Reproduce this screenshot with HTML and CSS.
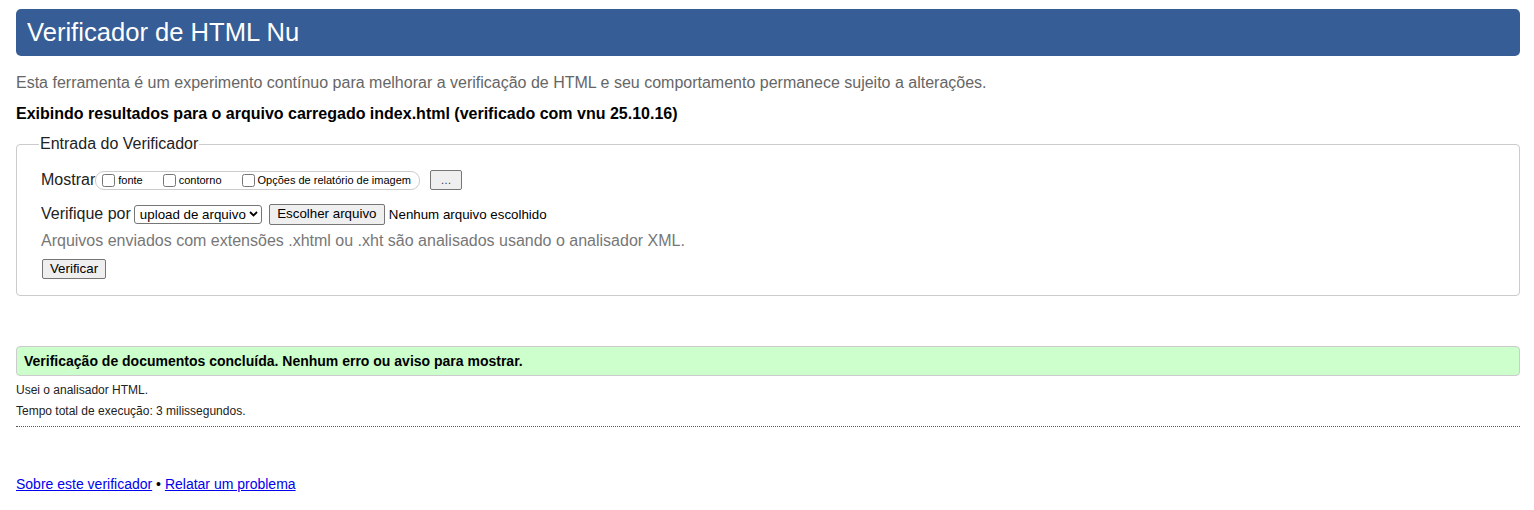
FILE: index.html
```html
<!DOCTYPE html>
<html lang="pt-BR">
<head>
<meta charset="utf-8">
<title>Verificador de HTML Nu</title>
<link rel="stylesheet" href="styles.css">
</head>
<body>
<h1 class="title">Verificador de HTML Nu</h1>
<p class="intro">Esta ferramenta é um experimento contínuo para melhorar a verificação de HTML e seu comportamento permanece sujeito a alterações.</p>
<p class="showing">Exibindo resultados para o arquivo carregado index.html (verificado com vnu 25.10.16)</p>
<fieldset class="input-box">
  <legend class="input-legend">Entrada do Verificador</legend>
  <div class="row">
    <span class="row-label">Mostrar</span><span class="options"><label class="opt"><input type="checkbox" class="cb">fonte</label><label class="opt"><input type="checkbox" class="cb">contorno</label><label class="opt last"><input type="checkbox" class="cb">Opções de relatório de imagem</label></span>
    <button class="btn dots" type="button">…</button>
  </div>
  <div class="row row2">
    <span class="row-label">Verifique por</span>
    <span class="sel" role="combobox"><span class="sel-text">upload de arquivo</span><svg class="chev" width="9" height="6" viewBox="0 0 9 6"><path d="M1 1 L4.5 4.5 L8 1" fill="none" stroke="#000" stroke-width="1.8"/></svg></span>
    <button class="btn choose" type="button">Escolher arquivo</button>
    <span class="nofile">Nenhum arquivo escolhido</span>
  </div>
  <p class="hint">Arquivos enviados com extensões .xhtml ou .xht são analisados usando o analisador XML.</p>
  <button class="btn submit" type="button">Verificar</button>
</fieldset>
<p class="success">Verificação de documentos concluída. Nenhum erro ou aviso para mostrar.</p>
<div class="details">
  <p class="detail">Usei o analisador HTML.</p>
  <p class="detail second">Tempo total de execução: 3 milissegundos.</p>
</div>
<p class="footer"><a href="#" class="flink">Sobre este verificador</a> • <a href="#" class="flink">Relatar um problema</a></p>
</body>
</html>
```

FILE: styles.css
```css
html, body {
  background: #fff;
}
body {
  margin: 0;
  padding: 0 14px 0 16px;
  font-family: "Liberation Sans", Arial, sans-serif;
  color: #000;
}
.title {
  margin: 9px 0 0;
  padding: 9px 11px;
  height: 29px;
  line-height: 29px;
  font-size: 25.6px;
  font-weight: normal;
  color: #fff;
  background: #365d95;
  border-radius: 5px;
}
.intro {
  margin: 18px 0 0;
  font-size: 16px;
  line-height: 18px;
  color: #666;
}
.showing {
  margin: 13px 0 0;
  font-size: 16px;
  line-height: 18px;
  font-weight: bold;
  color: #000;
}
.input-box {
  margin: 12px 0 0;
  padding: 16px 24px 16px 24px;
  border: 1px solid #ccc;
  border-radius: 4px;
  min-width: 0;
}
.input-legend {
  padding: 0 1px;
  margin-left: -2px;
  font-size: 16px;
  line-height: 18px;
  color: #222;
}
.row {
  display: flex;
  align-items: center;
  height: 22px;
  font-size: 16px;
  color: #222;
}
.row2 {
  margin-top: 12px;
}
.row-label {
  font-size: 16px;
  line-height: 18px;
}
.options {
  display: inline-flex;
  align-items: center;
  height: 17px;
  padding: 0 2px;
  border: 1px solid #ccc;
  border-radius: 9px;
  font-size: 11px;
  color: #000;
}
.opt {
  display: inline-flex;
  align-items: center;
  padding-right: 16px;
}
.opt.last {
  padding-right: 6px;
}
.cb {
  width: 13px;
  height: 13px;
  margin: 0 3px 0 4px;
}
.btn {
  font-family: "Liberation Sans", Arial, sans-serif;
  font-size: 13.33px;
  color: #000;
  background: #efefef;
  border: 1px solid #767676;
  border-radius: 2px;
  padding: 0 6px;
  height: 20px;
  line-height: 18px;
}
.dots {
  margin-left: 10px;
  width: 32px;
  font-size: 11px;
  color: #333;
}
.sel {
  margin-left: 3px;
  box-sizing: border-box;
  display: inline-flex;
  align-items: center;
  justify-content: space-between;
  height: 19px;
  width: 128px;
  padding: 0 3px 0 5px;
  font-family: "Liberation Sans", Arial, sans-serif;
  font-size: 13.33px;
  color: #000;
  background: #fff;
  border: 1px solid #767676;
  border-radius: 3px;
}
.chev {
  display: block;
}
.choose {
  margin-left: 7px;
  width: 116px;
  height: 21px;
  padding: 0;
}
.nofile {
  margin-left: 4px;
  font-size: 13.33px;
  color: #000;
}
.hint {
  margin: 7px 0 0;
  font-size: 16px;
  line-height: 18px;
  color: #777;
}
.submit {
  display: block;
  margin-top: 9px;
  margin-left: 1px;
  width: 64px;
  padding: 0;
}
.success {
  margin: 50px 0 0;
  padding: 6px 7px;
  font-size: 14px;
  line-height: 16px;
  font-weight: bold;
  color: #000;
  background: #ccffcc;
  border: 1px solid #ccc;
  border-radius: 4px;
}
.details {
  margin-top: 7px;
  padding-bottom: 8px;
  border-bottom: 1px dotted #555;
}
.detail {
  margin: 0;
  font-size: 12px;
  line-height: 14px;
  color: #222;
}
.detail.second {
  margin-top: 7px;
}
.footer {
  margin: 49px 0 0;
  font-size: 14px;
  line-height: 16px;
  color: #000;
}
.flink {
  color: #0000ee;
}
```
